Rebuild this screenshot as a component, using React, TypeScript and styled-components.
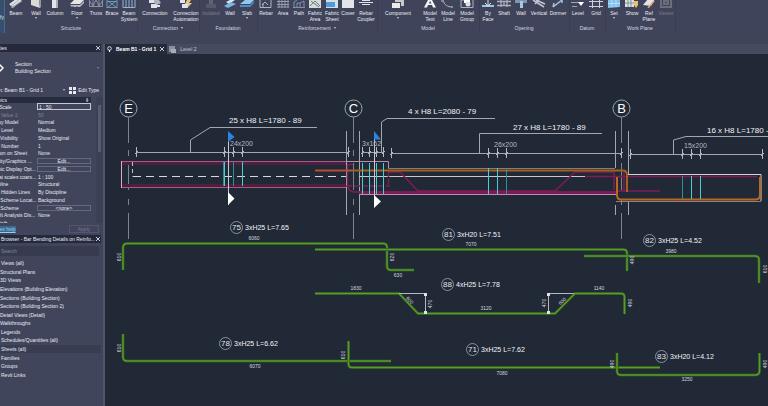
import React from 'react';
import styled, { createGlobalStyle } from 'styled-components';

const Global = createGlobalStyle`
  * { box-sizing: border-box; }
  html, body, #root { height: 100%; }
  body { margin: 0; overflow: hidden; background: #212836; }
  body, button, input { font: 5px/6px "Liberation Sans", Arial, sans-serif; color: #e8ebf2; }
  button, input { margin: 0; padding: 0; border: 0; background: none; white-space: nowrap; }
  ul { margin: 0; padding: 0; list-style: none; }
`;

const Shell = styled.div`
  height: 100%;
  display: flex;
  flex-direction: column;
`;

/* ---------- ribbon ---------- */
const Ribbon = styled.header`
  display: flex;
  flex: none;
  height: 44px;
  overflow: hidden;
  background: linear-gradient(#40445a 33px, #3f4559 33px);
`;
const Modify = styled.button`
  width: 5px;
  height: 33px;
  direction: rtl;
  overflow: hidden;
  background: #35506e;
  border-right: 1px solid #4a6c8c;
`;
const Group = styled.section`
  display: flex;
  flex-direction: column;
  height: 33px;
  box-shadow: 1px 0 #393e52;
`;
const Tools = styled.div`
  display: flex;
  height: 25px;
`;
const Tool = styled.button<{ $w: number; $dim?: boolean }>`
  width: ${p => p.$w}px;
  display: flex;
  flex-direction: column;
  align-items: center;
  white-space: pre;
  text-align: center;
  opacity: ${p => (p.$dim ? 0.3 : 1)};
  svg { flex: none; margin-bottom: 2px; }
`;
const GroupTitle = styled.div`
  text-align: center;
  color: #d3d7e0;
`;
const Caret = styled.i<{ $inline?: boolean }>`
  display: ${p => (p.$inline ? 'inline-block' : 'block')};
  flex: none;
  margin: 1px 0 1px ${p => (p.$inline ? 3 : 0)}px;
  border: 1px solid transparent;
  border-top: 2px solid #c9cdd8;
  border-bottom: 0;
`;

const W = '#dfe3ea';
const B = '#74b8ea';
const icons: Record<string, React.ReactNode> = {
  beam: <><path d="M1 5 9 -1M3 7 12 0" stroke={W} strokeWidth="2.4" /><path d="M2 8 13 1" stroke="#8b91a0" /></>,
  wall: <><path d="M2 0 10 0 11 8 2 5z" fill="#d9d9d6" /><path d="M10 0 12 0 12 7 11 8z" fill="#93979f" /></>,
  column: <><path d="M4 0h5v8h-5z" fill="#e4e5e8" /><path d="M8 0h2v8h-2z" fill="#a9adb7" /></>,
  floor: <><path d="M0 4 4 0 14 0 10 4z" fill="#e3e4e6" /><path d="M0 5h10l4-4v2l-4 4h-2l-1-1-1 1h-2l-1-1-1 1z" fill="#b9bcc2" /></>,
  truss: <path d="M.5 0v6.500h13V0M.5 1l3.500 5L7 0l3 6 3.500-5M4 0v6M10 0v6" fill="none" stroke="#9ba3b4" strokeWidth=".8" />,
  brace: <path d="M2 0v8M12 0v8M2 1.500h10M2 7.500h10M3 7l8-6M3 1l8 6" fill="none" stroke="#78a9cf" strokeWidth=".8" />,
  system: <path d="M1 0v7.500h12V0M4 0v7M7 0v7M10 0v7" fill="none" stroke="#8fb4d4" />,
  connection: <><path d="M1 0h5v3H1zM3 4h6v4H3z" fill={W} /><path d="M6 0h5l2 3-4 2-3-2z" fill="#adb3bf" /><path d="M9 5h3v2H9z" fill={W} /></>,
  automation: <><path d="M1 0h5v3H1zM3 4h6v4H3z" fill={W} /><path d="M8 0h4l-2 3h3l-5 5 1-4H6z" fill="#e7c98b" /></>,
  footing: <><path d="M5 0h4v4H5z" fill="#aaa" /><path d="M2 4h10v4H2z" fill="#888" /></>,
  fwall: <><path d="M3 2 9 -1 12 0 6 4z" fill={W} /><path d="M1 6 8 2 13 4 5 8z" fill={B} /></>,
  slab: <><path d="M0 4 5 0h9l-4 4z" fill="#8fcbf0" /><path d="M0 5h10l4-4v2l-4 4H0z" fill="#4d8fc5" /></>,
  rebar: <path d="M1 0v7.500h11V0M3 5l3-3 3 3M4 7V3" fill="none" stroke="#adb4c2" />,
  area: <path d="M3 0v8M6 0v8M9 0v8M12 0v8M1 1.500h12M1 4.500h12M1 7h12" stroke="#a6adbd" strokeWidth=".8" />,
  path: <path d="M1 7.500h12M2 7V2l3-2M5 7V3h3M8 7V3l4-2v6" fill="none" stroke="#7f91aa" />,
  fabric: <><path d="M1 0h12v8H1z" fill="#d5dad9" /><path d="M2 6l5-5 5 5M3 1l8 6" stroke="#67817b" fill="none" /></>,
  sheet: <><path d="M1 0h12v8H1z" fill="#d5dde5" /><path d="M1 2h9v5H1z" fill="#4e9cdc" /></>,
  cover: <path d="M1 0h12v8H1z" fill="#e2e4e9" />,
  coupler: <path d="M0 2.500h14M3 .500h8M3 4.500h8" stroke={W} strokeWidth="1.200" />,
  component: <><path d="M1 3h8v5H1z" fill="#ecebe6" /><path d="M4 0h9v6h-3V2H4z" fill="#c7c9cc" /></>,
  a: <path d="M1 7.500 5.500-1h3L13 7.500h-3L9 5H5L4 7.500zM6 3.500h2.500L7 1z" fill="#f2f3f5" />,
  line: <path d="M2 0c1 5 5 7 9 7M1 0v2M11 6v2" fill="none" stroke="#b4bac7" />,
  group: <><path d="M1 0h3M1 0v7.500h12V0" stroke="#aeb4c0" fill="none" /><path d="M4 0h6v3H4z" fill="#fff" /><circle cx="8" cy="4" r="2.500" fill={W} /></>,
  face: <><path d="M1 5h12v2H1z" fill="#9fc5e2" /><path d="M7 0v5M4 3l3 3 3-3" stroke={W} fill="none" /></>,
  shaft: <path d="M0 1.500h14M0 5.500h14M4 0v7M10 0v7M7 2v4" stroke="#a9b0be" strokeWidth="1.300" />,
  owall: <><path d="M1 0h12v3H1z" fill="#7f95ad" /><path d="M6 1h3v7H6z" fill="#a4c9e5" /></>,
  vertical: <path d="M1 0 12 7M4 0l9 4M3 4l4-4" stroke="#c0c5cf" strokeWidth="1.500" />,
  dormer: <path d="M2 7 11 0M2 7l1-4M11 0v3" stroke="#9fc5e2" strokeWidth="1.500" fill="none" />,
  level: <><path d="M0 2.500h9M1 6.500h5" stroke="#9aa2b2" /><path d="M7 2h6l-3 4z" fill="#fff" /></>,
  grid: <path d="M3.500 0v8M10.500 0v8M0 1.500h14M0 6.500h14" stroke="#cbd0da" />,
  set: <><path d="M1 0h12v7l-12 1z" fill="#83c1ee" /><path d="M5 0v7M9 0v7M1 3.500h12" stroke="#b9def7" /></>,
  show: <><path d="M0 0h9v7H0z" fill="#d9dfdd" /><path d="M3 0v7M6 0v7M0 3h9" stroke="#80919f" /><path d="M9 1h4v4l-2 3-2-3z" fill="#e9c16a" /></>,
  ref: <><path d="M1 5 6-1h7l-4 7z" fill={W} /><path d="M6 8l6-7" stroke="#e2a860" strokeWidth="1.500" /></>,
  viewer: <path d="M2 0v7h10V0M5 4h4V1H5z" fill="none" stroke="#ccc" strokeWidth="2" />,
};
const Icon = ({ name }: { name: string }) => (
  <svg width="14" height="8" viewBox="0 0 14 8" fill="none" aria-hidden="true">{icons[name]}</svg>
);

type T = [icon: string, label: string, width: number, caret?: boolean, dim?: boolean];
const groups: { title: string; caret?: boolean; tools: T[] }[] = [
  { title: 'Structure', tools: [['beam', 'Beam', 22], ['wall', 'Wall', 18, true], ['column', 'Column', 20], ['floor', 'Floor', 24, true], ['truss', 'Truss', 14], ['brace', 'Brace', 18], ['system', 'Beam\nSystem', 16]] },
  { title: 'Connection', caret: true, tools: [['connection', 'Connection', 36], ['automation', 'Connection\nAutomation', 26]] },
  { title: 'Foundation', tools: [['footing', 'Isolated', 24, false, true], ['fwall', 'Wall', 14], ['slab', 'Slab', 20, true]] },
  { title: 'Reinforcement', caret: true, tools: [['rebar', 'Rebar', 18], ['area', 'Area', 16], ['path', 'Path', 16], ['fabric', 'Fabric\nArea', 16], ['sheet', 'Fabric\nSheet', 18], ['cover', 'Cover', 14], ['coupler', 'Rebar\nCoupler', 22]] },
  { title: 'Model', tools: [['component', 'Component', 42, true], ['a', 'Model\nText', 22], ['line', 'Model\nLine', 14], ['group', 'Model\nGroup', 24]] },
  { title: 'Opening', tools: [['face', 'By\nFace', 18], ['shaft', 'Shaft', 14], ['owall', 'Wall', 20], ['vertical', 'Vertical', 16], ['dormer', 'Dormer', 22]] },
  { title: 'Datum', tools: [['level', 'Level', 18], ['grid', 'Grid', 18]] },
  { title: 'Work Plane', tools: [['set', 'Set', 18, true], ['show', 'Show', 18], ['ref', 'Ref\nPlane', 16], ['viewer', 'Viewer', 18, false, true]] },
];

/* ---------- side panels ---------- */
const Body = styled.div`
  flex: 1;
  min-height: 0;
  display: flex;
`;
const Sidebar = styled.aside`
  flex: none;
  width: 105px;
  display: flex;
  flex-direction: column;
  overflow: hidden;
  background: #41455b;
  border-right: 2px solid #51566b;
`;
const TitleBar = styled.h2`
  margin: 0 2px 0 -16px;
  height: 8px;
  flex: none;
  display: flex;
  justify-content: space-between;
  align-items: center;
  background: #242a3b;
  font-size: 5px;
  font-weight: 400;
  white-space: nowrap;
`;
const Close = styled.button`
  width: 6px;
  height: 8px;
  display: grid;
  place-items: center;
`;
const Cross = () => (
  <svg width="4" height="4" viewBox="0 0 4 4" aria-hidden="true"><path d="M0 0 4 4M4 0 0 4" stroke="#dfe2ea" strokeWidth=".9" /></svg>
);
const TypePicker = styled.button`
  height: 31px;
  flex: none;
  display: flex;
  align-items: center;
  gap: 11px;
  text-align: left;
  line-height: 7px;
  white-space: pre;
  ${Caret} { margin-left: 35px; opacity: .5; }
`;
const InstanceRow = styled.div`
  height: 14px;
  flex: none;
  display: flex;
  align-items: center;
  justify-content: space-between;
  margin: 0 4px 0 -15px;
  white-space: nowrap;
`;
const Instance = styled.button`
  width: 80px;
  display: flex;
  justify-content: space-between;
  align-items: center;
`;
const EditType = styled.button`
  display: flex;
  align-items: center;
  gap: 2px;
`;
const PropsArea = styled.div`
  display: flex;
  flex: none;
  margin-left: -13px;
`;
const Props = styled.div`
  width: 104px;
`;
const Section = styled.div`
  height: 6px;
  display: flex;
  justify-content: space-between;
  padding-right: 2px;
  background: #262c3f;
`;
const Rows = styled.div`
  height: 120px;
  overflow: hidden;
`;
const RowList = styled.div`
  height: 124px;
  display: flex;
  flex-direction: column;
`;
const Row = styled.label<{ $dim?: boolean }>`
  flex: 1;
  min-height: 0;
  display: grid;
  grid-template-columns: 50px 1fr;
  align-items: center;
  white-space: nowrap;
  opacity: ${p => (p.$dim ? 0.35 : 1)};
`;
const Value = styled.input<{ $focus?: boolean }>`
  width: 100%;
  height: 7px;
  padding-left: ${p => (p.$focus ? 2 : 1)}px;
  outline: ${p => (p.$focus ? '1px solid #c3c7d1' : 'none')};
  outline-offset: -1px;
`;
const CellButton = styled.button`
  height: 6px;
  line-height: 4px;
  text-align: center;
  border: 1px solid #636980;
`;
const Scroll = styled.div`
  width: 7px;
  margin-left: 5px;
  padding: 8px 2px;
  background: #3b4055;
  &::before { content: ''; display: block; height: 47px; background: #555b70; }
`;
const Footer = styled.div`
  height: 12px;
  flex: none;
  display: flex;
  justify-content: space-between;
  align-items: center;
  margin-left: -18px;
  padding-right: 4px;
`;
const Help = styled.a`
  color: #8fd0f5;
  background: #3d6a8c;
  text-decoration: underline;
`;
const Apply = styled.button`
  width: 30px;
  height: 8px;
  color: #727890;
  border: 1px solid #51566c;
`;
const Search = styled.input`
  flex: none;
  height: 10px;
  margin: 3px 4px 3px 0;
  padding-left: 1px;
  background: #363b50;
  &::placeholder { color: #81879a; opacity: 1; }
`;
const Tree = styled.ul`
  flex: none;
  height: 120px;
  display: flex;
  flex-direction: column;
`;
const Node = styled.li<{ $sel?: boolean; $root?: boolean }>`
  flex: 1;
  display: flex;
  align-items: center;
  margin-right: 2px;
  padding-left: ${p => (p.$root ? 1 : 0)}px;
  background: ${p => (p.$sel ? '#393d51' : 'none')};
`;

const rows: [string, string, ('edit' | 'dim' | 'focus')?][] = [
  ['View Scale', '1 : 50', 'focus'], ['Scale Value    1:', '50', 'dim'], ['Display Model', 'Normal'],
  ['Detail Level', 'Medium'], ['Parts Visibility', 'Show Original'], ['Detail Number', '1'],
  ['Rotation on Sheet', 'None'], ['Visibility/Graphics ...', 'Edit...', 'edit'], ['Graphic Display Opt...', 'Edit...', 'edit'],
  ['Hide at scales coars...', '1 : 100'], ['Discipline', 'Structural'], ['Show Hidden Lines', 'By Discipline'],
  ['Color Scheme Locat...', 'Background'], ['Color Scheme', '<none>', 'edit'], ['Default Analysis Dis...', 'None'],
  ['Sun Path', ''],
];
const nodes: [string, boolean?][] = [
  ['Views (all)', true], ['Structural Plans'], ['3D Views'], ['Elevations (Building Elevation)'],
  ['Sections (Building Section)'], ['Sections (Building Section 2)'], ['Detail Views (Detail)'], ['Walkthroughs'],
  ['Legends', true], ['Schedules/Quantities (all)', true], ['Sheets (all)', true], ['Families', true], ['Groups', true], ['Revit Links', true],
];

/* ---------- drawing area ---------- */
const Main = styled.main`
  flex: 1;
  min-width: 0;
  display: flex;
  flex-direction: column;
`;
const Tabs = styled.nav`
  height: 10px;
  flex: none;
  display: flex;
  background: #464c60;
`;
const Tab = styled.button<{ $active?: boolean }>`
  display: flex;
  align-items: center;
  gap: 4px;
  padding: 0 3px 0 2px;
  font-weight: ${p => (p.$active ? 700 : 400)};
  background: ${p => (p.$active ? '#242b3a' : 'none')};
  color: ${p => (p.$active ? '#fff' : '#c5c9d3')};
`;
const Canvas = styled.svg`
  display: block;
  width: 100%;
  flex: 1;
  min-height: 0;
  background: #212836;
  font-family: "Liberation Sans", Arial, sans-serif;
`;
const Note = styled.text<{ $small?: boolean }>`
  font-size: ${p => (p.$small ? 7 : 8)}px;
  fill: #f2f4f7;
`;
const Count = styled.text`
  font-size: 7px;
  fill: #b3b8c2;
`;
const Dim = styled.text`
  font-size: 5px;
  fill: #d3d7de;
  text-anchor: middle;
  dominant-baseline: central;
`;
const GridName = styled.text`
  font-size: 13px;
  fill: #fff;
  text-anchor: middle;
`;
const MarkNo = styled.text`
  font-size: 8px;
  fill: #e3e6eb;
  text-anchor: middle;
`;

const bars = [
  'M123 270V248Q123 243.500 127 243.500H383Q387 243.500 387 247V266Q387 270 391 270H414',
  'M315 249.500H623Q627 249.500 627 253V271',
  'M315 293.500H399L418 313.500H555L575 293.500H621Q624.500 293.500 624.500 297V314',
  'M584 256H755Q759 256 759 260V283',
  'M123 334V357Q123 361 127 361H391',
  'M348.500 341V364Q348.500 367.500 352 367.500H660',
  'M617 353V371Q617 375 621 375H755Q759.500 375 759.500 371V353',
];
const marks: [number, number, string, string][] = [
  [236, 227, '75', '3xH25 L=7.65'], [448, 234, '81', '3xH20 L=7.51'], [447, 284, '88', '4xH25 L=7.78'],
  [649, 240, '82', '3xH25 L=4.52'], [225, 343, '78', '3xH25 L=6.62'], [472, 349, '71', '3xH25 L=7.62'], [661, 356, '83', '3xH20 L=4.12'],
];
const dims: [number, number, string, number?][] = [
  [254, 238, '6060'], [471, 244, '7070'], [119, 257, '610', -90], [392, 257, '620', -90], [398, 275, '630'],
  [356, 288, '1830'], [410, 300, '600', 45], [430, 304, '470', -90], [486, 308, '3120'], [544, 303, '470', -90],
  [562, 301, '600', -45], [599, 288, '1140'], [630, 303, '490', -90], [632, 260, '490', -90], [671, 251, '3980'],
  [765, 269, '610', -90], [119, 348, '610', -90], [255, 366, '6070'], [343, 355, '610', -90], [502, 373, '7080'],
  [612, 364, '490', -90], [687, 379, '3250'], [765, 364, '490', -90],
];
const axes: [number, string][] = [[128, 'E'], [353, 'C'], [621, 'B']];
const notes: [number, number, string][] = [
  [229, 123, '25 x H8 L=1780 - 89'], [408, 114, '4 x H8 L=2080 - 79'], [513, 130, '27 x H8 L=1780 - 89'], [707, 133, '16 x H8 L=1780 -'],
];
const counts: [number, number, string][] = [[230, 146, '24x200'], [362, 146, '3x162'], [494, 147, '26x200'], [684, 148, '15x200']];
const ticks: [number, number][] = [
  [136, 152], [224, 152], [233, 152], [242, 152], [348, 152], [362, 152], [369, 152], [376, 152], [383, 152],
  [391, 153], [488, 153], [497, 153], [506, 153], [621, 153], [630, 154], [682, 154], [691, 154], [700, 154], [762, 154],
];

const Drawing = () => (
  <Canvas viewBox="105 54 663 352" preserveAspectRatio="xMinYMin meet" fill="none" role="img" aria-label="Beam reinforcement section">
    {/* grid axes */}
    {axes.map(([x, n]) => (
      <g key={n}>
        <circle cx={x + 0.5} cy="108.500" r="8.500" stroke="#9fa4af" />
        <path d={`M${x + 0.5} 117V143M${x + 0.5} 150V156M${x + 0.5} 163V190M${x + 0.5} 199V205M${x + 0.5} 213V239`} stroke="#7d838f" />
        <GridName x={x + 0.5} y="113">{n}</GridName>
      </g>
    ))}
    {/* beam outline */}
    <path d="M122 163.500H346M122 185.500H346" stroke="#4f1f40" strokeWidth="3" />
    <path d="M121 161.500H346M121 187.500H346" stroke="#a65b83" />
    <path d="M121.500 161V188" stroke="#eba6c7" />
    <path d="M132.500 162V176.500" stroke="#b9bdc6" strokeDasharray="4 3" />
    <path d="M133 176.500H346" stroke="#d5d8de" strokeDasharray="8 5" />
    <path d="M346.500 131V215M359.500 131V215M615.500 131V168M615.500 205V215M628.500 131V174M628.500 201V215" stroke="#a2a7b2" />
    <path d="M346 161.500H388.500V168" stroke="#b58fa9" />
    <path d="M388 168.500H615" stroke="#877c7a" />
    <path d="M359 176.500H585" stroke="#cfc5d1" />
    <path d="M359 192.500H616" stroke="#781c55" strokeWidth="3" />
    <path d="M359 194.500H616" stroke="#b892ab" />
    <path d="M628 174.500H761V201" stroke="#d7d0d5" />
    <path d="M616 201.500H761" stroke="#958175" />
    {/* placed bars */}
    <g stroke="#7f1c56" strokeWidth="1.500">
      <path d="M347.500 165V184Q348 192 354 192H400" />
      <path d="M353 164.500H346M346 186H390M388.500 171V186" strokeDasharray="6 2" />
      <path d="M388 172H400L418 191H555L575 172H614V190" />
      <path d="M585 176.500H757M616 191H660M624 172V190" />
    </g>
    <path d="M315 170.500H347" stroke="#b94c35" strokeWidth="2" />
    <path d="M347 170.500H623Q627 170.500 627 175V192" stroke="#a5601f" strokeWidth="2" />
    <path d="M617 177V195Q617 199.500 621 199.500H755Q760 199.500 760 195V177" stroke="#b9691f" strokeWidth="2" />
    {/* stirrups */}
    <path d="M224.500 162V186M242.500 162V186M362.500 163V194M369.500 163V194M376.500 163V194M383.500 163V194M488.500 168V194M497.500 168V194M691.500 176V199M700.500 176V199" stroke="#4ccdd0" />
    <path d="M233.500 162V186M506.500 168V194M682.500 176V199" stroke="#2e8f96" />
    <path d="M223.500 162V186" stroke="#2b8a90" />
    {/* dimension strings */}
    <path d="M136 152.500H348M362 152.500H384M391 153.500H621M630 154.500H763" stroke="#a2a7b2" />
    {ticks.map(([x, y]) => <path key={x} d={`M${x + 0.5} ${y - 5}v10M${x - 1} ${y + 2}l3-3`} stroke="#b4b8c1" />)}
    <path d="M190.500 152V140L210 127.500H317M381.500 152V122L387 118.500H495M479.500 153V133.500H602M673.500 154V140L686 136.500H768" stroke="#a2a7b2" />
    {/* section markers */}
    <path d="M228.500 132V205M374.500 132V205" stroke="#c5c8d0" />
    <path d="M228 131V142L234.500 137ZM374 131V139.500H381Z" fill="#2d83e0" />
    <path d="M228 192V205L234.500 198.500ZM374 195V208L381 201.500Z" fill="#fff" />
    {notes.map(([x, y, t]) => <Note key={x} x={x} y={y}>{t}</Note>)}
    {counts.map(([x, y, t]) => <Count key={x} x={x} y={y}>{t}</Count>)}
    {/* bending details */}
    {bars.map(d => (
      <g key={d}>
        <path d={d} stroke="#2a541d" strokeWidth="3" />
        <path d={d} stroke="#5b9a2e" strokeWidth="1.500" />
      </g>
    ))}
    <path d="M399 293.500H426M425.500 294V313M548.500 294V313M547 293.500H574" stroke="#b4b8c1" />
    <path d="M424 293h3v3h-3zM424 311h3v3h-3zM547 293h3v3h-3zM547 311h3v3h-3z" fill="#dfe2e8" />
    {marks.map(([x, y, n, t]) => (
      <g key={n}>
        <circle cx={x + 0.5} cy={y + 0.5} r="6" stroke="#a2a7b2" strokeWidth=".8" />
        <MarkNo x={x + 0.5} y={y + 3}>{n}</MarkNo>
        <Note $small x={x + 9} y={y + 3}>{t}</Note>
      </g>
    ))}
    {dims.map(([x, y, t, r]) => <Dim key={`${x},${y}`} transform={`translate(${x} ${y}) rotate(${r ?? 0})`}>{t}</Dim>)}
  </Canvas>
);

export default function App() {
  return (
    <Shell>
      <Global />
      <Ribbon>
        <Modify>Modify</Modify>
        {groups.map(g => (
          <Group key={g.title}>
            <Tools>
              {g.tools.map(([icon, label, w, caret, dim]) => (
                <Tool key={icon} $w={w} $dim={dim}>
                  <Icon name={icon} />{label}{caret && <Caret />}
                </Tool>
              ))}
            </Tools>
            <GroupTitle>{g.title}{g.caret && <Caret $inline />}</GroupTitle>
          </Group>
        ))}
      </Ribbon>
      <Body>
        <Sidebar>
          <TitleBar>Properties<Close aria-label="Close properties"><Cross /></Close></TitleBar>
          <TypePicker>
            <svg width="4" height="8" viewBox="0 0 4 8" aria-hidden="true"><path d="M-3 1 0 1 3 4 0 7H-3" fill="none" stroke="#fff" strokeWidth="1.500" /></svg>
            {'Section\nBuilding Section'}<Caret />
          </TypePicker>
          <InstanceRow>
            <Instance>Section: Beam B1 - Grid 1<Caret /></Instance>
            <EditType>
              <svg width="7" height="7" viewBox="0 0 7 7" aria-hidden="true"><path d="M0 0h3v3H0zM4 0h3v3H4zM0 4h3v3H0zM4 4h3v3H4z" fill="#e6e9ef" /></svg>
              Edit Type
            </EditType>
          </InstanceRow>
          <PropsArea>
            <Props>
              <Section>Graphics<span>⇞</span></Section>
              <Rows>
                <RowList>
                  {rows.map(([k, v, kind]) => (
                    <Row key={k} $dim={kind === 'dim'}>
                      {k}
                      {kind === 'edit' ? <CellButton>{v}</CellButton> : <Value defaultValue={v} $focus={kind === 'focus'} />}
                    </Row>
                  ))}
                </RowList>
              </Rows>
            </Props>
            <Scroll />
          </PropsArea>
          <Footer><Help href="#help">Properties help</Help><Apply>Apply</Apply></Footer>
          <TitleBar>Project Browser - Bar Bending Details on Reinfo...<Close aria-label="Close browser"><Cross /></Close></TitleBar>
          <Search placeholder="Search" aria-label="Search" />
          <Tree>
            {nodes.map(([n, root]) => <Node key={n} $root={root} $sel={n === 'Sheets (all)'}><button>{n}</button></Node>)}
          </Tree>
        </Sidebar>
        <Main>
          <Tabs>
            <Tab $active>
              <svg width="5" height="6" viewBox="0 0 5 6" aria-hidden="true"><circle cx="2.500" cy="2.500" r="1.800" fill="none" stroke="#fff" strokeWidth=".8" /><path d="M2.500 4v2" stroke="#fff" /></svg>
              Beam B1 - Grid 1 <Cross />
            </Tab>
            <Tab>
              <svg width="7" height="7" viewBox="0 0 7 7" aria-hidden="true"><path d="M0 0h6v6H0z" fill="#8b91a1" /><path d="M2 3h5v4H2z" fill="#a7acb9" /></svg>
              Level 2
            </Tab>
          </Tabs>
          <Drawing />
        </Main>
      </Body>
    </Shell>
  );
}
